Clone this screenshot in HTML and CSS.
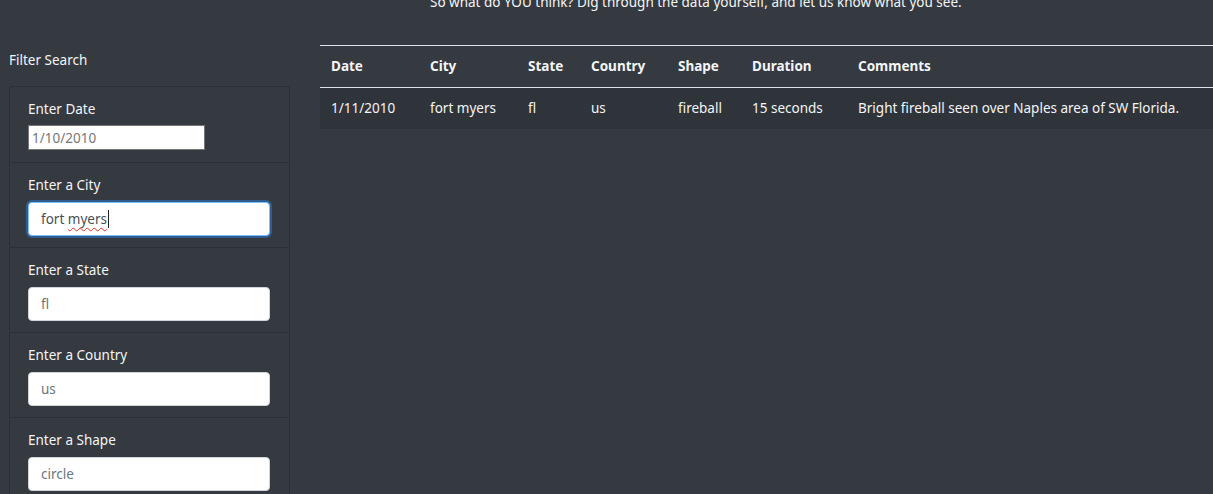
FILE: index.html
```html
<!DOCTYPE html>
<html>
<head>
<meta charset="utf-8">
<link rel="stylesheet" href="styles.css">
</head>
<body>
<p class="intro">So what do YOU think? Dig through the data yourself, and let us know what you see.</p>
<div class="layout">
  <aside class="sidebar">
    <div class="filter-title">Filter Search</div>
    <ul class="filters">
      <li class="filter">
        <label class="filter-label">Enter Date</label>
        <input class="date-input" type="text" placeholder="1/10/2010">
      </li>
      <li class="filter">
        <label class="filter-label">Enter a City</label>
        <div class="field focused"><span class="typed">fort <span class="misspelled">myers</span></span><span class="caret"></span></div>
      </li>
      <li class="filter">
        <label class="filter-label">Enter a State</label>
        <input class="field" type="text" placeholder="fl">
      </li>
      <li class="filter">
        <label class="filter-label">Enter a Country</label>
        <input class="field" type="text" placeholder="us">
      </li>
      <li class="filter">
        <label class="filter-label">Enter a Shape</label>
        <input class="field" type="text" placeholder="circle">
      </li>
    </ul>
  </aside>
  <main class="results">
    <table class="ufo-table">
      <colgroup>
        <col class="c-date"><col class="c-city"><col class="c-state"><col class="c-country"><col class="c-shape"><col class="c-duration"><col class="c-comments">
      </colgroup>
      <thead>
        <tr><th>Date</th><th>City</th><th>State</th><th>Country</th><th>Shape</th><th>Duration</th><th>Comments</th></tr>
      </thead>
      <tbody>
        <tr><td>1/11/2010</td><td>fort myers</td><td>fl</td><td>us</td><td>fireball</td><td>15 seconds</td><td>Bright fireball seen over Naples area of SW Florida.</td></tr>
      </tbody>
    </table>
  </main>
</div>
</body>
</html>
```
FILE: styles.css
```css
html, body {
  margin: 0;
  padding: 0;
  background: #353a41;
  color: #f4f5f6;
  font-family: "Noto Sans", "Open Sans", sans-serif;
  font-size: 13.5px;
  overflow: hidden;
}
.intro {
  margin: -8px 0 0 430px;
  line-height: 20px;
  height: 20px;
  white-space: nowrap;
}
.layout {
  display: flex;
  margin-top: 33px;
}
.sidebar {
  width: 311px;
  flex: none;
  padding-left: 9px;
  box-sizing: border-box;
}
.filter-title {
  line-height: 20px;
  margin-top: 5px;
  height: 20px;
  margin-bottom: 16px;
}
.filters {
  list-style: none;
  margin: 0;
  padding: 0;
  width: 279px;
  border: 1px solid #2b3036;
  border-bottom: none;
  border-radius: 4px 4px 0 0;
}
.filter {
  padding: 12px 17px 11px 18px;
  border-bottom: 1px solid #2b3036;
}
.filter-label {
  display: block;
  line-height: 20px;
  margin-bottom: 7px;
}
.date-input {
  display: block;
  width: 177px;
  height: 25px;
  box-sizing: border-box;
  border: 1px solid #767676;
  padding: 0 3px;
  font: inherit;
  font-size: 13.5px;
  color: #333;
  background: #fff;
  margin-top: -1px;
  margin-bottom: 1px;
}
.date-input::placeholder { color: #777; }
.field {
  display: flex;
  align-items: center;
  width: 242px;
  height: 34px;
  box-sizing: border-box;
  border: 1px solid #ced4da;
  border-radius: 4px;
  background: #fff;
  padding: 0 12px;
  font: inherit;
  font-size: 13.5px;
  color: #495057;
}
.field::placeholder { color: #6c757d; }
.field.focused {
  border-color: #80bdff;
  box-shadow: 0 0 0 2px #2f5d8f;
}
.typed { white-space: pre; }
.misspelled {
  text-decoration: underline wavy #e03030;
  text-decoration-thickness: 1px;
  text-underline-offset: 3px;
}
.caret {
  display: inline-block;
  width: 1px;
  height: 18px;
  background: #222;
  margin-left: 1px;
}
.results {
  flex: 1;
  padding-left: 9px;
  min-width: 0;
}
.ufo-table {
  width: 893px;
  border-collapse: collapse;
  table-layout: fixed;
  color: #f4f5f6;
}
.c-date { width: 99px; }
.c-city { width: 98px; }
.c-state { width: 63px; }
.c-country { width: 87px; }
.c-shape { width: 74px; }
.c-duration { width: 106px; }
.ufo-table th, .ufo-table td {
  text-align: left;
  padding: 10px 11px;
  line-height: 21px;
  white-space: nowrap;
}
.ufo-table th {
  font-weight: 700;
  border-top: 1px solid #dee2e6;
  border-bottom: 1px solid #dee2e6;
}
.ufo-table tbody tr {
  background: #2f343a;
}
```
